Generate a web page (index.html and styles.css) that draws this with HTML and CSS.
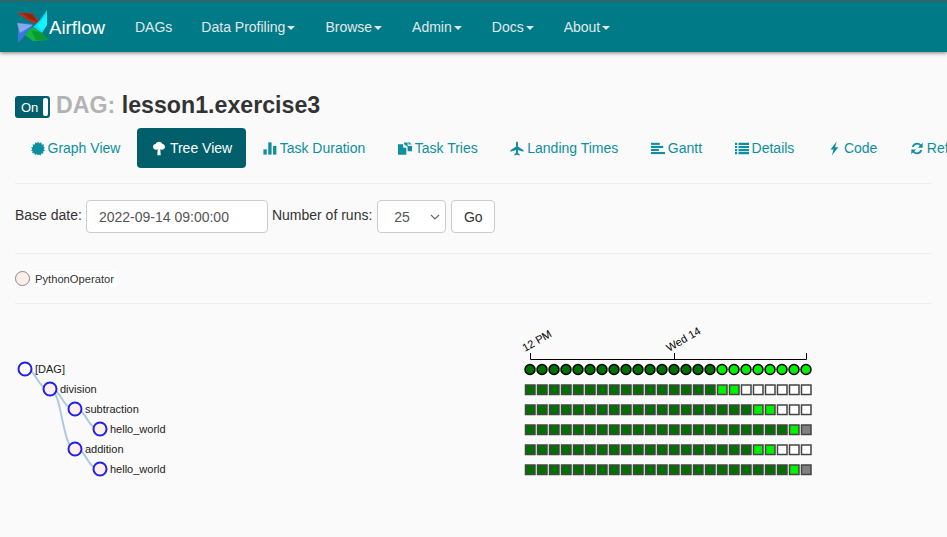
FILE: index.html
```html
<!DOCTYPE html>
<html lang="en">
<head>
  <meta charset="UTF-8" />
  <title>Airflow</title>
  <link rel="stylesheet" href="styles.css">
</head>
<body>
  <nav class="navbar">
    <a class="brand" href="#">
      <svg class="logo" viewBox="16 9 34 35" width="34" height="35">
        <polygon points="17,13 32,13 40,23 33,23 28,20" fill="#c8280f"/>
        <polygon points="22,13 32,14 38,22 30,19" fill="#8f2410"/>
        <polygon points="47,10 47,25 42,33 33,27 40,20" fill="#16d6f2"/>
        <polygon points="47,14 47,25 42,31 37,26" fill="#0ff4ff"/>
        <polygon points="18,43 18,30 20,23 33,24 28,32" fill="#3a78dc"/>
        <polygon points="17,23 33,25 20,33" fill="#86a8ec"/>
        <polygon points="48,40 33,41 25,35 32,27 42,33" fill="#10b83c"/>
        <polygon points="48,40 36,40 31,30 42,33" fill="#0c9a30"/>
      </svg>
      <span>Airflow</span>
    </a>
    <a class="nav-link" href="#">DAGs</a>
    <a class="nav-link" href="#">Data Profiling<b class="caret"></b></a>
    <a class="nav-link" href="#">Browse<b class="caret"></b></a>
    <a class="nav-link" href="#">Admin<b class="caret"></b></a>
    <a class="nav-link" href="#">Docs<b class="caret"></b></a>
    <a class="nav-link" href="#">About<b class="caret"></b></a>
  </nav>

  <div class="title-row">
    <div class="toggle"><span>On</span><i class="knob"></i></div>
    <h4 class="dag-title"><span class="muted">DAG:</span> lesson1.exercise3</h4>
  </div>

  <ul class="tabs">
    <li><a href="#">
      <svg class="icon" viewBox="0 0 16 16"><path d="M8 0l1.500 2.100L11.700.9l.5 2.500 2.600.1-.5 2.500L16 7l-1.500 1.700L16 10.500l-2.300.9.500 2.500-2.600-.1-.5 2.200-2.200-1.200L8 16l-1.400-1.700-2.200 1.200-.5-2.200-2.600.1.500-2.500L0 10.500l1.500-1.800L0 7l2.300-1-.5-2.500 2.600-.1.5-2.500 2.200 1.200z"/></svg>
      Graph View</a></li>
    <li class="active"><a href="#">
      <svg class="icon tree-icon" viewBox="0 0 14 16"><path d="M7 0c2.200 0 3.500 1.200 3.700 2.600C12.600 3 14 4.300 14 6c0 2-1.700 3.500-3.700 3.500-.8 0-1.500-.2-1.800-.5L9 16H5l.5-7c-.3.300-1 .5-1.800.5C1.700 9.500 0 8 0 6c0-1.700 1.400-3 3.300-3.400C3.500 1.200 4.800 0 7 0z"/></svg>
      Tree View</a></li>
    <li><a href="#">
      <svg class="icon" viewBox="0 0 16 16"><rect x="0.500" y="9" width="3.800" height="6"/><rect x="6" y="1" width="3.800" height="14"/><rect x="11.500" y="5" width="3.800" height="10"/></svg>
      Task Duration</a></li>
    <li><a href="#">
      <svg class="icon" viewBox="0 0 16 16"><path d="M0 3h6v4h3.500v8H0z"/><path d="M7 1h4v4h5v6h-5V6L7 3z"/><path d="M12 0l3.500 3.500H12z"/></svg>
      Task Tries</a></li>
    <li><a href="#">
      <svg class="icon" viewBox="0 0 16 16"><path d="M8 0c.8 0 1.100 1 1.100 2v3.800L15.500 10v1.600L9.100 9.800v3.200l1.900 1.500V16L8 15l-3 1v-1.500L6.900 13V9.800L.5 11.600V10l6.400-4.200V2C6.900 1 7.200 0 8 0z"/></svg>
      Landing Times</a></li>
    <li><a href="#">
      <svg class="icon" viewBox="0 0 16 16"><rect x="0" y="1.500" width="10" height="2.400"/><rect x="0" y="5" width="14" height="2.400"/><rect x="0" y="8.500" width="9" height="2.400"/><rect x="0" y="12" width="16" height="2.400"/></svg>
      Gantt</a></li>
    <li><a href="#">
      <svg class="icon" viewBox="0 0 16 16"><path d="M0 1.500h2.500V4H0zM4 1.500h12V4H4zM0 5h2.500v2.500H0zM4 5h12v2.500H4zM0 8.500h2.500V11H0zM4 8.500h12V11H4zM0 12h2.500v2.500H0zM4 12h12v2.500H4z"/></svg>
      Details</a></li>
    <li><a href="#">
      <svg class="icon" viewBox="0 0 16 16"><path d="M11 0L4 9h3.500L5.500 16 13 6.500H9.300z"/></svg>
      Code</a></li>
    <li><a href="#">
      <svg class="icon" viewBox="0 0 16 16"><path d="M2.200 6.400A6 6 0 0 1 12.600 3.400L14.500 1.500V7H9l2.100-2.100A4 4 0 0 0 4.300 6.400zM13.800 9.600A6 6 0 0 1 3.400 12.600L1.500 14.500V9H7l-2.100 2.100a4 4 0 0 0 6.800-1.500z"/></svg>
      Refresh</a></li>
  </ul>

  <form class="date-form">
    <label>Base date:</label>
    <input class="control date-input" type="text" value="2022-09-14 09:00:00">
    <label>Number of runs:</label>
    <div class="control run-select">
      <span>25</span>
      <svg viewBox="0 0 10 6" width="10" height="6"><path d="M1 1l4 4 4-4" fill="none" stroke="#666" stroke-width="1.200"/></svg>
    </div>
    <button class="go" type="button">Go</button>
  </form>

  <div class="legend">
    <span class="legend-dot"></span>
    <span class="legend-label">PythonOperator</span>
  </div>

  <div class="tree-view">
    <svg class="tree" width="200" height="170" viewBox="0 0 200 170">
      <g class="links">
        <path d="M25 15C37 15 37 35 50 35"/>
        <path d="M50 35C62 35 62 55 75 55"/>
        <path d="M75 55C87 55 87 75 100 75"/>
        <path d="M50 35C62 35 62 95 75 95"/>
        <path d="M75 95C87 95 87 115 100 115"/>
      </g>
      <g class="node root"><circle cx="25" cy="15" r="6.500"/><text x="35" y="19">[DAG]</text></g>
      <g class="node"><circle cx="50" cy="35" r="6.500"/><text x="60" y="39">division</text></g>
      <g class="node"><circle cx="75" cy="55" r="6.500"/><text x="85" y="59">subtraction</text></g>
      <g class="node"><circle cx="100" cy="75" r="6.500"/><text x="110" y="79">hello_world</text></g>
      <g class="node"><circle cx="75" cy="95" r="6.500"/><text x="85" y="99">addition</text></g>
      <g class="node"><circle cx="100" cy="115" r="6.500"/><text x="110" y="119">hello_world</text></g>
    </svg>
    <svg id="grid" class="grid" width="320" height="170" viewBox="520 322 320 170"></svg>
  </div>

  <script src="script.js"></script>
</body>
</html>
```

FILE: styles.css
```css
* {
  box-sizing: border-box;
}
html, body {
  height: 100%;
}
body {
  margin: 0;
  background: #fafafa;
  font-family: "Liberation Sans", Arial, sans-serif;
  color: #333;
  overflow: hidden;
}
a {
  text-decoration: none;
}

.navbar {
  display: flex;
  align-items: center;
  height: 52px;
  background: #017a87;
  border-top: 1px solid #555;
  box-shadow: 0 1px 4px rgba(0, 0, 0, .5);
}
.brand {
  display: flex;
  align-items: center;
  width: 135px;
  padding-left: 16px;
  color: #fff;
  font-size: 18.7px;
}
.brand span {
  margin-top: 2px;
  margin-left: -1px;
}
.logo {
  flex: none;
}
.nav-link {
  margin-right: 30px;
  color: #e0e8ea;
  font-size: 14px;
}
.nav-link:nth-child(2) {
  margin-right: 29px;
}
.caret {
  display: inline-block;
  margin-left: 2px;
  vertical-align: middle;
  border-top: 4px solid #e0e8ea;
  border-left: 4px solid transparent;
  border-right: 4px solid transparent;
}

.title-row {
  display: flex;
  align-items: center;
  height: 75px;
  padding: 35px 15px 0;
}
.toggle {
  display: flex;
  align-items: center;
  justify-content: space-between;
  width: 35px;
  height: 22px;
  padding: 0 2px 0 6px;
  border-radius: 3px;
  background: #005f6a;
  color: #fff;
  font-size: 13px;
}
.knob {
  width: 5px;
  height: 18px;
  border-radius: 2px;
  background: #fff;
}
.dag-title {
  margin: 0 0 4px 6px;
  font-size: 23.2px;
  font-weight: bold;
  color: #333;
}
.muted {
  color: #b3b3b3;
}

.tabs {
  display: flex;
  margin: 0 15px;
  padding: 1px 0 15px;
  list-style: none;
  white-space: nowrap;
  border-bottom: 1px solid #eee;
}
.tabs li {
  flex: none;
  margin-right: .5px;
}
.tabs a {
  display: flex;
  align-items: center;
  height: 40px;
  padding: 0 16px;
  border-radius: 4px;
  color: #0d8fa0;
  font-size: 14px;
}
.tabs li:first-child {
  margin-left: -.5px;
}
.tabs .active a {
  padding-right: 14px;
  background: #005f6a;
  color: #fff;
}
.icon {
  flex: none;
  width: 14px;
  height: 15px;
  margin-right: 3px;
  fill: currentColor;
}
.tree-icon {
  width: 12px;
  margin-right: 5px;
}

.date-form {
  display: flex;
  align-items: center;
  gap: 4px;
  margin: 0 15px;
  padding: 16px 0 20px;
  border-bottom: 1px solid #eee;
  font-size: 14px;
}
.date-form label {
  margin-bottom: 3px;
}
.control {
  height: 33px;
  border: 1px solid #ccc;
  border-radius: 4px;
  background: #fff;
  color: #555;
  font: inherit;
}
.date-input {
  width: 182px;
  padding: 0 12px;
}
.run-select {
  display: flex;
  align-items: center;
  justify-content: space-between;
  width: 69px;
  margin-left: 1px;
  padding: 0 5px 0 16px;
}
.go {
  width: 44px;
  height: 33px;
  margin-left: 1px;
  padding: 0;
  border: 1px solid #ccc;
  border-radius: 4px;
  background: #fff;
  color: #333;
  font: inherit;
}

.legend {
  display: flex;
  align-items: center;
  height: 50px;
  margin: 0 15px;
  border-bottom: 1px solid #eee;
}
.legend-dot {
  width: 15px;
  height: 15px;
  border: 1px solid #888;
  border-radius: 50%;
  background: #ffefeb;
}
.legend-label {
  margin-left: 2px;
  padding: 2px 3px;
  border-radius: 3px;
  background: #fff;
  font-size: 11.2px;
}

.tree-view {
  display: flex;
  padding-top: 50px;
}
.grid {
  margin-left: 320px;
  margin-top: -32px;
}
.links path {
  fill: none;
  stroke: #a9c9e4;
  stroke-width: 2;
}
.node circle {
  fill: #ffefeb;
  stroke: #1f1fee;
  stroke-width: 2;
}
.node.root circle {
  fill: #fff;
}
.node text {
  font-size: 11px;
  fill: #222;
}

.axis {
  fill: none;
  stroke: #000;
  stroke-width: 1;
}
.axis-label {
  font-size: 11px;
  fill: #000;
}
.cell {
  stroke: #444;
  stroke-width: 1.5;
}
.run {
  stroke: #000;
  stroke-width: 1.5;
}
.dark { fill: #007000; }
.lime { fill: #00f000; }
.none { fill: #fff; }
.skip { fill: #808080; }
```

FILE: script.js
```js
const NS = 'http://www.w3.org/2000/svg';
const svg = document.getElementById('grid');

// one letter per run: d = success, l = running, n = no status, s = skipped
const rows = [
  'd'.repeat(16) + 'll' + 'n'.repeat(6),
  'd'.repeat(19) + 'll' + 'nnn',
  'd'.repeat(22) + 'ls',
  'd'.repeat(19) + 'll' + 'nnn',
  'd'.repeat(22) + 'ls'
];
const cls = { d: 'dark', l: 'lime', n: 'none', s: 'skip' };

function add(tag, attrs, parent) {
  const el = document.createElementNS(NS, tag);
  for (const k in attrs) el.setAttribute(k, attrs[k]);
  (parent || svg).appendChild(el);
  return el;
}

add('path', { class: 'axis', d: 'M530.5 353V359.5H806.5V353M674.5 353V359.5' });

[['12 PM', 525, 352], ['Wed 14', 669, 352]].forEach(([label, x, y]) => {
  const t = add('text', { class: 'axis-label', x, y, transform: `rotate(-30 ${x} ${y})` });
  t.textContent = label;
});

for (let i = 0; i < 24; i++) {
  const cx = 530 + i * 12;
  add('circle', { class: 'run ' + (i < 16 ? 'dark' : 'lime'), cx, cy: 369.5, r: 5 });
}

rows.forEach((row, r) => {
  [...row].forEach((c, i) => {
    add('rect', {
      class: 'cell ' + cls[c],
      x: 525.5 + i * 12,
      y: 385 + r * 20,
      width: 9.5,
      height: 9.5
    });
  });
});
```
